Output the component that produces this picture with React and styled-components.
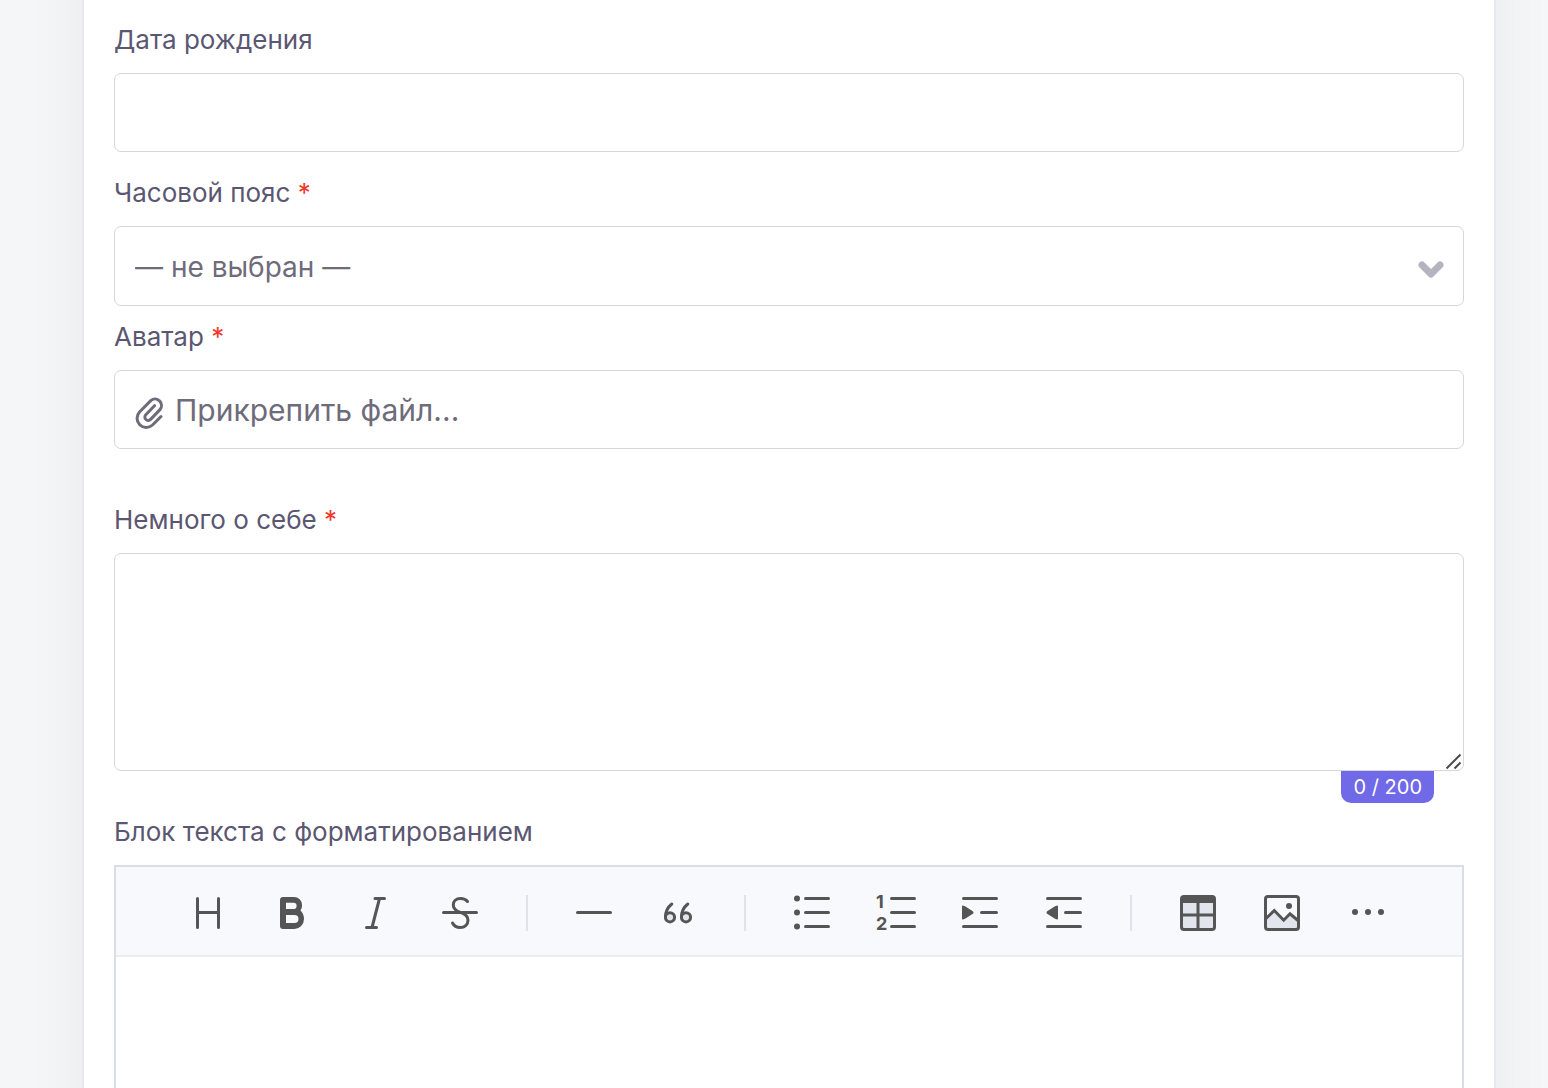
import { useState } from "react";
import styled, { createGlobalStyle } from "styled-components";

const App = () => {
  const [about, setabout] = useState("");
  const [text, settext] = useState("");

  return (
    <Page>
      <GlobalStyle />
      <Card>
        <Field $gap="24px">
          <Label htmlFor="birthday">Дата рождения</Label>
          <Input id="birthday" type="text" />
        </Field>

        <Field $gap="14px">
          <Label htmlFor="timezone">
            Часовой пояс <Star>*</Star>
          </Label>
          <SelectWrap>
            <Select id="timezone" defaultValue="">
              <option value="">— не выбран —</option>
            </Select>
            <Chevron viewBox="0 0 26 18" aria-hidden="true">
              <path d="M4 4l9 9 9-9" />
            </Chevron>
          </SelectWrap>
        </Field>

        <Field $gap="54px">
          <Label htmlFor="avatar">
            Аватар <Star>*</Star>
          </Label>
          <FileBox>
            <Clip viewBox="0 0 28 34" aria-hidden="true">
              <path d="M26 20.5L17.5 29A9.2 9.2 0 0 1 4.5 16L16 4.4A6.5 6.5 0 0 1 25.2 13.4L15.6 23.4A3.3 3.3 0 0 1 10.8 18.8L19.5 9.7" />
            </Clip>
            <span>Прикрепить файл...</span>
            <HiddenFile id="avatar" type="file" />
          </FileBox>
        </Field>

        <Field $gap="44px">
          <Label htmlFor="about">
            Немного о себе <Star>*</Star>
          </Label>
          <AreaWrap>
            <Area
              id="about"
              maxLength={200}
              value={about}
              onChange={(e) => setabout(e.target.value)}
            />
            <Grip viewBox="0 0 18 18" aria-hidden="true">
              <path d="M1.5 16.5l14-14M9.5 16.5l6-6" />
            </Grip>
            <Counter>{about.length} / 200</Counter>
          </AreaWrap>
        </Field>

        <Field $gap="0">
          <Label htmlFor="content">Блок текста с форматированием</Label>
          <Editor>
            <Toolbar>
              <Tool type="button" aria-label="Заголовок">
                <Icon viewBox="0 0 48 48">
                  <path d="M13.5 9.5v29M34.5 9.5v29M13.5 23.5h21" />
                </Icon>
              </Tool>
              <Tool type="button" aria-label="Жирный">
                <Icon viewBox="0 0 48 48">
                  <path
                    className="solid"
                    fillRule="evenodd"
                    d="M15 8h11a8 8 0 0 1 8 8c0 2.500-.6 4-1.500 5.500 2.200 2 3.500 5 3.500 8.500a9.500 10 0 0 1-9.500 10H15a3 3 0 0 1-3-3V11a3 3 0 0 1 3-3zM18 13.8V20h7.5a3.1 3.1 0 0 0 0-6.2zM18 26v8h8.5a4 4 0 0 0 0-8z"
                  />
                </Icon>
              </Tool>
              <Tool type="button" aria-label="Курсив">
                <Icon viewBox="0 0 48 48">
                  <path d="M23 9.5h9.5M14.5 38.5h10M27.5 9.5l-7.5 29" />
                </Icon>
              </Tool>
              <Tool type="button" aria-label="Зачёркнутый">
                <Icon viewBox="0 0 48 48">
                  <path d="M7.5 23.5h33M31.5 12.5C30 10.5 27.5 9.5 24.5 9.5c-4.500 0-7.200 2.800-7.200 6.400 0 4.200 3 6 7.200 7.500 4.500 1.500 7.500 3.800 7.500 7.800 0 4.500-3.500 7.300-7.700 7.300-3.600 0-6.300-1.500-7.800-4.500" />
                </Icon>
              </Tool>
              <Divider />
              <Tool type="button" aria-label="Линия">
                <Icon viewBox="0 0 48 48">
                  <path d="M7.5 23.5h33" />
                </Icon>
              </Tool>
              <Tool type="button" aria-label="Цитата">
                <Icon viewBox="0 0 48 48">
                  <circle className="tint" cx="16" cy="28.3" r="4.6" />
                  <circle className="tint" cx="32" cy="28.3" r="4.6" />
                  <path d="M17.8 15c-3.500 2.800-6.300 8-6.300 13M33.8 15c-3.500 2.800-6.300 8-6.300 13" />
                </Icon>
              </Tool>
              <Divider />
              <Tool type="button" aria-label="Маркированный список">
                <Icon viewBox="0 0 48 48">
                  <circle className="solid" cx="9" cy="9.5" r="3" />
                  <circle className="solid" cx="9" cy="23.5" r="3" />
                  <circle className="solid" cx="9" cy="37.5" r="3" />
                  <path d="M17.5 9.5h23M17.5 23.5h23M17.5 37.5h23" />
                </Icon>
              </Tool>
              <Tool type="button" aria-label="Нумерованный список">
                <Icon viewBox="0 0 48 48">
                  <text x="4" y="19">1</text>
                  <text x="4" y="41">2</text>
                  <path d="M19.5 9.5h23M19.5 23.5h23M19.5 37.5h23" />
                </Icon>
              </Tool>
              <Tool type="button" aria-label="Увеличить отступ">
                <Icon viewBox="0 0 48 48">
                  <path d="M7.5 9.5h33M25.5 23.5h15M7.5 37.5h33" />
                  <path
                    className="solid"
                    d="M6 17.5q0-1.5 1.5-.8l1.500.6 7.500 4.600q2 1.600 0 3.200l-7.500 4.600-1.500.6q-1.500.8-1.500-.8z"
                  />
                </Icon>
              </Tool>
              <Tool type="button" aria-label="Уменьшить отступ">
                <Icon viewBox="0 0 48 48">
                  <path d="M7.5 9.5h33M25.5 23.5h15M7.5 37.5h33" />
                  <path
                    className="solid"
                    d="M18 17.5q0-1.5-1.5-.8l-1.500.6-7.500 4.600q-2 1.600 0 3.200l7.500 4.600 1.500.6q1.500.8 1.500-.8z"
                  />
                </Icon>
              </Tool>
              <Divider />
              <Tool type="button" aria-label="Таблица">
                <Icon viewBox="0 0 48 48">
                  <rect className="tint" x="7.5" y="7.5" width="33" height="33" rx="2.5" />
                  <path className="solid" d="M7 8h34v6H7z" />
                  <path d="M24 14v25M9 26h30" />
                </Icon>
              </Tool>
              <Tool type="button" aria-label="Изображение">
                <Icon viewBox="0 0 48 48">
                  <path className="shade" d="M8 30l8-8 10 9 6-6 8 6v9H8z" />
                  <rect x="7.5" y="7.5" width="33" height="33" rx="2.5" />
                  <path className="sharp" d="M8 29.5l8.3-8 9.4 9.7 6.3-6.4 8 6.7" />
                  <circle className="solid" cx="31" cy="17" r="3" />
                </Icon>
              </Tool>
              <Tool type="button" aria-label="Ещё">
                <Icon viewBox="0 0 48 48">
                  <circle className="solid" cx="13" cy="23" r="3" />
                  <circle className="solid" cx="26" cy="23" r="3" />
                  <circle className="solid" cx="39" cy="23" r="3" />
                </Icon>
              </Tool>
            </Toolbar>
            <Content
              id="content"
              value={text}
              onChange={(e) => settext(e.target.value)}
            />
          </Editor>
        </Field>
      </Card>
    </Page>
  );
};

//Styled-Components

const GlobalStyle = createGlobalStyle`
  * {
    box-sizing: border-box;
  }

  body {
    margin: 0;
    background: #f5f6f8;
    font-family: Inter, "Noto Sans", sans-serif;
  }

  button, input, select, textarea {
    font-family: inherit;
  }
`;

const Page = styled.div`
  height: 100vh;
  overflow: hidden;
  padding: 0 52px 0 82px;
`;

/* the card runs past both edges of the window */
const Card = styled.form`
  margin-top: -80px;
  padding: 101px 30px 80px;
  background: #ffffff;
  border: 2px solid #e8e8ee;
  box-shadow: 0 0 60px rgba(40, 40, 40, 0.055);
`;

const Field = styled.div`
  display: flex;
  flex-direction: column;
  gap: 16px;
  margin-bottom: ${(props) => props.$gap};
`;

const Label = styled.label`
  color: #5b5772;
  font-size: 26px;
  line-height: 34px;
`;

const Star = styled.span`
  color: #f0392b;
`;

const Input = styled.input`
  width: 100%;
  height: 79px;
  padding: 0 20px;
  border: 1px solid #d6d6dc;
  border-radius: 7px;
  background: #ffffff;
  color: #6e6b7b;
  font-size: 30px;
`;

const SelectWrap = styled.div`
  display: grid;
  align-items: center;

  > * {
    grid-area: 1 / 1;
  }
`;

const Select = styled.select`
  appearance: none;
  width: 100%;
  height: 80px;
  padding: 2px 60px 0 20px;
  border: 1px solid #d6d6dc;
  border-radius: 7px;
  background: #ffffff;
  color: #6e6b7b;
  font-size: 28px;
`;

const Chevron = styled.svg`
  justify-self: end;
  width: 26px;
  height: 18px;
  margin: 8px 20px 0 0;
  fill: none;
  stroke: #b5b3be;
  stroke-width: 7;
  stroke-linecap: round;
  stroke-linejoin: round;
  pointer-events: none;
`;

const FileBox = styled.label`
  display: flex;
  align-items: center;
  gap: 12px;
  height: 79px;
  padding: 0 20px;
  border: 1px solid #d6d6dc;
  border-radius: 7px;
  color: #6e6b7b;
  font-size: 30px;
  cursor: pointer;
`;

const Clip = styled.svg`
  width: 28px;
  height: 34px;
  margin-top: 6px;
  fill: none;
  stroke: #6e6b7b;
  stroke-width: 3;
  stroke-linecap: round;
  stroke-linejoin: round;
`;

const HiddenFile = styled.input`
  width: 1px;
  height: 1px;
  opacity: 0;
`;

const AreaWrap = styled.div`
  position: relative;
`;

const Area = styled.textarea`
  display: block;
  width: 100%;
  height: 218px;
  padding: 20px;
  border: 1px solid #d6d6dc;
  border-radius: 7px;
  background: #ffffff;
  color: #6e6b7b;
  font-size: 30px;
  resize: none;
`;

const Grip = styled.svg`
  position: absolute;
  right: 1px;
  bottom: 1px;
  width: 18px;
  height: 18px;
  fill: none;
  stroke: #4a4a4a;
  stroke-width: 2;
  pointer-events: none;
`;

const Counter = styled.span`
  position: absolute;
  top: 100%;
  right: 30px;
  padding: 0 12px;
  border-radius: 0 0 10px 10px;
  background: #7069e8;
  color: #ffffff;
  font-size: 20px;
  line-height: 32px;
`;

const Editor = styled.div`
  border: 2px solid #dadde6;
`;

const Toolbar = styled.div`
  display: flex;
  align-items: center;
  height: 90px;
  padding: 4px 50px 0;
  background: #f7f9fc;
  border-bottom: 2px solid #ebedf2;
`;

const Tool = styled.button`
  display: flex;
  align-items: center;
  justify-content: center;
  width: 84px;
  height: 64px;
  padding: 0;
  border: 0;
  background: none;
  cursor: pointer;
`;

const Icon = styled.svg`
  width: 48px;
  height: 48px;
  fill: none;
  stroke: #555555;
  stroke-width: 3;
  stroke-linecap: round;
  stroke-linejoin: round;

  .solid {
    fill: #555555;
    stroke: none;
  }

  .tint {
    fill: #e2e4ee;
  }

  .shade {
    fill: #e2e4ee;
    stroke: none;
  }

  .sharp {
    stroke-linecap: butt;
    stroke-linejoin: miter;
  }

  text {
    fill: #555555;
    stroke: none;
    font-family: Inter, sans-serif;
    font-size: 18px;
    font-weight: 700;
  }
`;

const Divider = styled.span`
  width: 2px;
  height: 36px;
  margin: 0 24px;
  background: #e1e3e9;
`;

const Content = styled.textarea`
  display: block;
  width: 100%;
  height: 400px;
  padding: 30px 50px;
  border: 0;
  background: #ffffff;
  color: #555555;
  font-size: 26px;
  resize: none;
`;

export default App;
